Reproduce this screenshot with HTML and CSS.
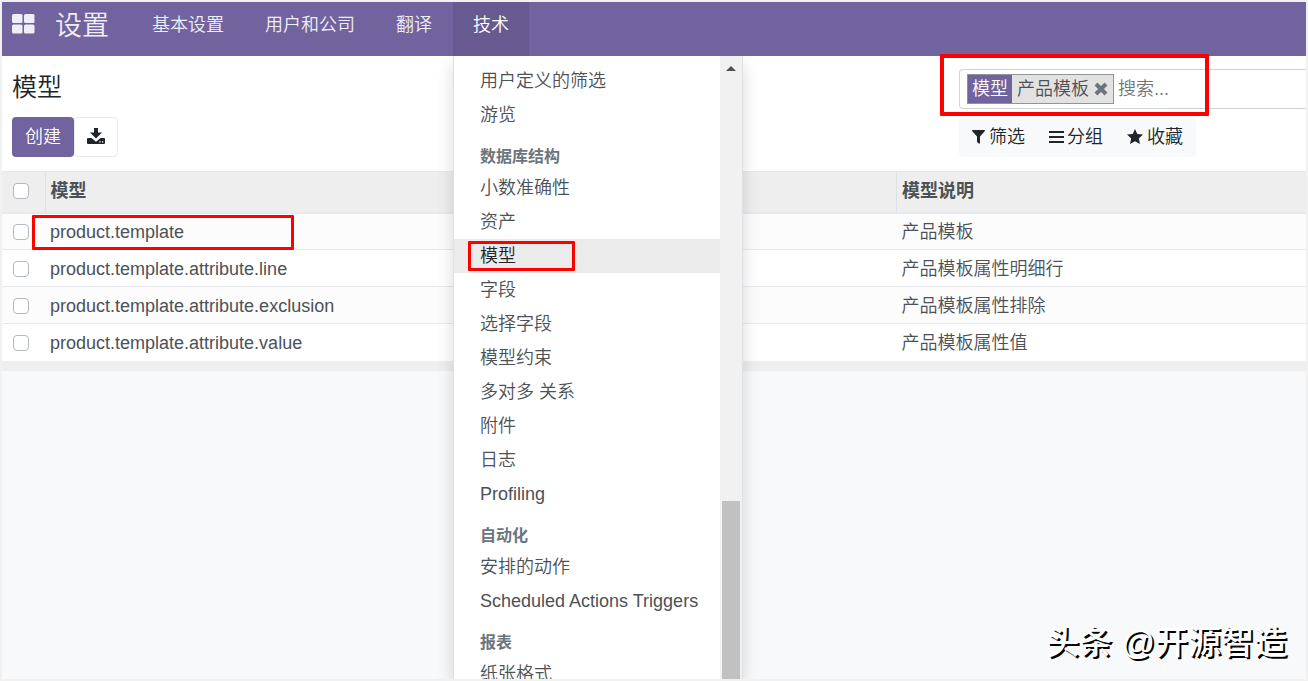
FILE: index.html
```html
<!DOCTYPE html>
<html lang="zh-CN">
<head>
<meta charset="utf-8">
<title>模型 - 设置</title>
<link rel="stylesheet" href="styles.css">
</head>
<body>
<div class="app">
  <header class="navbar">
    <button class="apps" type="button" aria-label="应用">
      <svg viewBox="0 0 23 20" width="23" height="20" fill="currentColor"><rect width="10.5" height="9" rx="1.5"/><rect x="12" width="10.5" height="9" rx="1.5"/><rect y="10.5" width="10.5" height="9" rx="1.5"/><rect x="12" y="10.5" width="10.5" height="9" rx="1.5"/></svg>
    </button>
    <a class="brand" href="#">设置</a>
    <nav class="nav">
      <a class="nav-link" href="#">基本设置</a>
      <a class="nav-link" href="#">用户和公司</a>
      <a class="nav-link" href="#">翻译</a>
      <div class="nav-drop">
        <a class="nav-link active" href="#">技术</a>
        <div class="menu">
          <div class="menu-list">
            <a class="menu-item" href="#">用户定义的筛选</a>
            <a class="menu-item" href="#">游览</a>
            <h6 class="menu-head">数据库结构</h6>
            <a class="menu-item" href="#">小数准确性</a>
            <a class="menu-item" href="#">资产</a>
            <a class="menu-item current" href="#">模型<span class="mark mark-menu"></span></a>
            <a class="menu-item" href="#">字段</a>
            <a class="menu-item" href="#">选择字段</a>
            <a class="menu-item" href="#">模型约束</a>
            <a class="menu-item" href="#">多对多 关系</a>
            <a class="menu-item" href="#">附件</a>
            <a class="menu-item" href="#">日志</a>
            <a class="menu-item" href="#">Profiling</a>
            <h6 class="menu-head">自动化</h6>
            <a class="menu-item" href="#">安排的动作</a>
            <a class="menu-item" href="#">Scheduled Actions Triggers</a>
            <h6 class="menu-head">报表</h6>
            <a class="menu-item" href="#">纸张格式</a>
          </div>
          <div class="scrollbar">
            <svg class="scroll-up" viewBox="0 0 10 5" width="10" height="5"><path d="M0 5 5 0l5 5z" fill="#505050"/></svg>
            <div class="scroll-thumb"></div>
          </div>
        </div>
      </div>
    </nav>
  </header>

  <section class="control">
    <div class="control-left">
      <h1 class="title">模型</h1>
      <div class="buttons">
        <button class="btn btn-primary" type="button">创建</button>
        <button class="btn btn-export" type="button" aria-label="导出">
          <svg viewBox="0 0 18 18" width="18" height="18"><path fill="#212529" d="M7 0h4v4.500h4l-6 6-6-6h4zM1 10h3.500L9 13.800l4.500-3.800H17q1 0 1 1v4q0 1-1 1H1q-1 0-1-1v-4q0-1 1-1z"/><path fill="#fff" d="M12.300 13.300h1.300v1.300h-1.300zM15 13.300h1.300v1.300H15z"/></svg>
        </button>
      </div>
    </div>
    <div class="control-right">
      <div class="search">
        <div class="facet">
          <span class="facet-label">模型</span>
          <span class="facet-value">产品模板</span>
          <button class="facet-remove" type="button" aria-label="移除">
            <svg viewBox="0 0 14 14" width="14" height="14"><path d="M2 2l10 10M12 2L2 12" stroke="#6c757d" stroke-width="4"/></svg>
          </button>
        </div>
        <input class="search-input" type="text" placeholder="搜索..." aria-label="搜索">
        <span class="mark mark-search"></span>
      </div>
      <div class="filters">
        <button class="filter" type="button"><svg viewBox="0 0 13 14" width="13" height="14"><path fill="#212529" d="M.5 0h12q.8.500.2 1.300L8 6.500V13q-.3 1-1.200.500L5 11.700V6.500L.3 1.300Q-.2.500.5 0z"/></svg>筛选</button>
        <button class="filter filter-group" type="button"><svg viewBox="0 0 15 14" width="15" height="14"><path stroke="#212529" stroke-width="2" d="M0 2h15M0 7h15M0 12h15"/></svg>分组</button>
        <button class="filter" type="button"><svg viewBox="0 0 16 16" width="16" height="16"><path fill="#212529" d="M8 0l2.300 5 5.700.6-4.200 3.800L13 15l-5-2.800L3 15l1.200-5.600L0 5.600 5.700 5z"/></svg>收藏</button>
      </div>
    </div>
  </section>

  <table class="list">
    <thead>
      <tr>
        <th class="col-check"><input class="check" type="checkbox" aria-label="全选"></th>
        <th class="col-model">模型</th>
        <th>模型说明</th>
      </tr>
    </thead>
    <tbody>
      <tr><td class="col-check"><input class="check" type="checkbox" aria-label="product.template"></td><td><div class="cell">product.template<span class="mark mark-row"></span></div></td><td>产品模板</td></tr>
      <tr><td class="col-check"><input class="check" type="checkbox" aria-label="product.template.attribute.line"></td><td>product.template.attribute.line</td><td>产品模板属性明细行</td></tr>
      <tr><td class="col-check"><input class="check" type="checkbox" aria-label="product.template.attribute.exclusion"></td><td>product.template.attribute.exclusion</td><td>产品模板属性排除</td></tr>
      <tr><td class="col-check"><input class="check" type="checkbox" aria-label="product.template.attribute.value"></td><td>product.template.attribute.value</td><td>产品模板属性值</td></tr>
    </tbody>
  </table>
  <div class="list-foot"></div>
  <div class="watermark">头条 @开源智造</div>
</div>
</body>
</html>
```

FILE: styles.css
```css
* { box-sizing: border-box; }

body {
  margin: 0;
  height: 100vh;
  padding: 2px;
  overflow: hidden;
  background: #f1f1f1;
  color: #4c5157;
  font-family: "Liberation Sans", "Noto Sans CJK SC", sans-serif;
  font-size: 18px;
  line-height: 26px;
  font-weight: 350;
}

a { color: inherit; text-decoration: none; }

button, input {
  font: inherit;
  color: inherit;
  margin: 0;
}

button {
  padding: 0;
  border: 0;
  background: none;
}

svg { display: block; }

.app {
  position: relative;
  height: 100%;
  overflow: hidden;
  background: #f8f9fb;
}

/* Top bar */
.navbar {
  display: flex;
  height: 54px;
  background: #71639e;
  color: #f0eef5;
}

.apps { padding: 0 0 10px 10px; }

.brand {
  width: 97px;
  padding-left: 20px;
  font-size: 27px;
  line-height: 48px;
}

.nav { display: flex; gap: 1px; }

.nav-link {
  display: block;
  height: 54px;
  padding: 0 20px;
  line-height: 46px;
}

.nav-link.active { background: #675a91; color: #fff; }

.nav-drop { position: relative; }

/* Drop-down menu */
.menu {
  position: absolute;
  z-index: 5;
  top: 54px;
  left: 0;
  display: flex;
  width: 290px;
  height: calc(100vh - 58px);
  overflow: hidden;
  border: solid #dee2e6;
  border-width: 0 1px;
  background: #fff;
  color: #4c5157;
}

.navbar::after {
  content: "";
  position: absolute;
  z-index: 4;
  top: 54px;
  bottom: 0;
  left: 451px;
  width: 290px;
  box-shadow: 0 8px 16px rgba(0, 0, 0, 0.15);
  clip-path: inset(0 -30px);
}

.menu-list { flex: 1; padding-top: 8px; }

.menu-item {
  position: relative;
  display: block;
  padding: 4px 0 4px 26px;
  white-space: nowrap;
}

.menu-item.current { background: #ebebeb; color: #212529; }

.menu-head {
  margin: 0;
  padding: 14px 0 3px 26px;
  color: #6c757d;
  font-size: 16px;
  line-height: 22px;
  font-weight: 700;
}

.scrollbar {
  display: flex;
  flex-direction: column;
  width: 22px;
  padding: 10px 2px 0;
  background: #f1f1f1;
}

.scroll-up { align-self: center; }

.scroll-thumb {
  height: 29%;
  margin-top: auto;
  background: #c1c1c1;
}

/* Control panel */
.control {
  display: flex;
  justify-content: space-between;
  height: 115px;
  background: #fff;
}

.control-left { padding: 14px 0 0 10px; }

.title {
  margin: 0 0 13px;
  color: #212529;
  font-size: 25px;
  line-height: 34px;
  font-weight: 350;
}

.buttons { display: flex; }

.btn {
  height: 40px;
  border-radius: 4px;
}

.btn-primary {
  padding: 0 13px;
  background: #71639e;
  color: #fff;
}

.btn-export {
  padding: 0 12px;
  border: 1px solid #e7e9ed;
  background: #fff;
}

.control-right { width: 347px; padding-top: 13px; }

.search {
  position: relative;
  display: flex;
  height: 40px;
  padding: 4px 0 4px 7px;
  border: 1px solid #ced4da;
  border-right: 0;
  border-radius: 4px 0 0 4px;
}

.facet {
  display: flex;
  height: 30px;
  border: 1px solid #8f9698;
  background: #e2e2e0;
  line-height: 28px;
}

.facet-label {
  padding: 0 4px;
  background: #71639e;
  color: #fff;
}

.facet-value { padding: 0 5px; }

.facet-remove { padding-right: 5px; }

.search-input {
  flex: 1;
  min-width: 0;
  padding: 0 4px;
  border: 0;
  outline: 0;
  background: none;
}

.search-input::placeholder { color: #757575; opacity: 1; }

.filters {
  display: flex;
  width: max-content;
  height: 40px;
  margin-top: 8px;
  padding: 0 13px;
  gap: 24px;
  border-radius: 4px;
  background: #f8f9fb;
  color: #212529;
}

.filter {
  display: flex;
  align-items: center;
  gap: 4px;
}

.filter-group { gap: 3px; }

/* Records */
.list {
  width: 100%;
  border-collapse: collapse;
  table-layout: fixed;
  background: #fff;
}

.list th,
.list td {
  height: 37px;
  padding: 1px 0 0 5px;
  border-top: 1px solid #e7e9ed;
  text-align: left;
}

.list th {
  height: 41px;
  padding: 0 0 2px 5px;
  border-left: 1px solid #dee2e6;
  border-bottom: 2px solid #e6e9ed;
  background: #eee;
  font-weight: 700;
}

.list tbody tr:nth-child(odd) { background: #fcfcfc; }

.list .col-check {
  width: 43px;
  padding-left: 11px;
  border-left: 0;
}

.list .col-model { width: 65.3%; }

.cell { position: relative; }

.check {
  display: block;
  appearance: none;
  width: 16px;
  height: 16px;
  border: 1px solid #b3b9c2;
  border-radius: 4px;
  background: #fff;
}

.list-foot { height: 10px; background: #eee; }

/* Red callout frames */
.mark {
  position: absolute;
  border: 3px solid #f00;
  border-radius: 1px;
  pointer-events: none;
}

.mark-menu { top: 2px; left: 14px; width: 107px; height: 30px; }
.mark-row { top: -4px; left: -18px; width: 262px; height: 35px; }
.mark-search { z-index: 6; top: -16px; left: -20px; width: 269px; height: 62px; border-width: 4px; }

.watermark {
  position: absolute;
  right: 19px;
  bottom: 12px;
  color: #fff;
  font-size: 33px;
  line-height: 48px;
  font-weight: 500;
  text-shadow: 2px 2px 0 #000;
}
```
